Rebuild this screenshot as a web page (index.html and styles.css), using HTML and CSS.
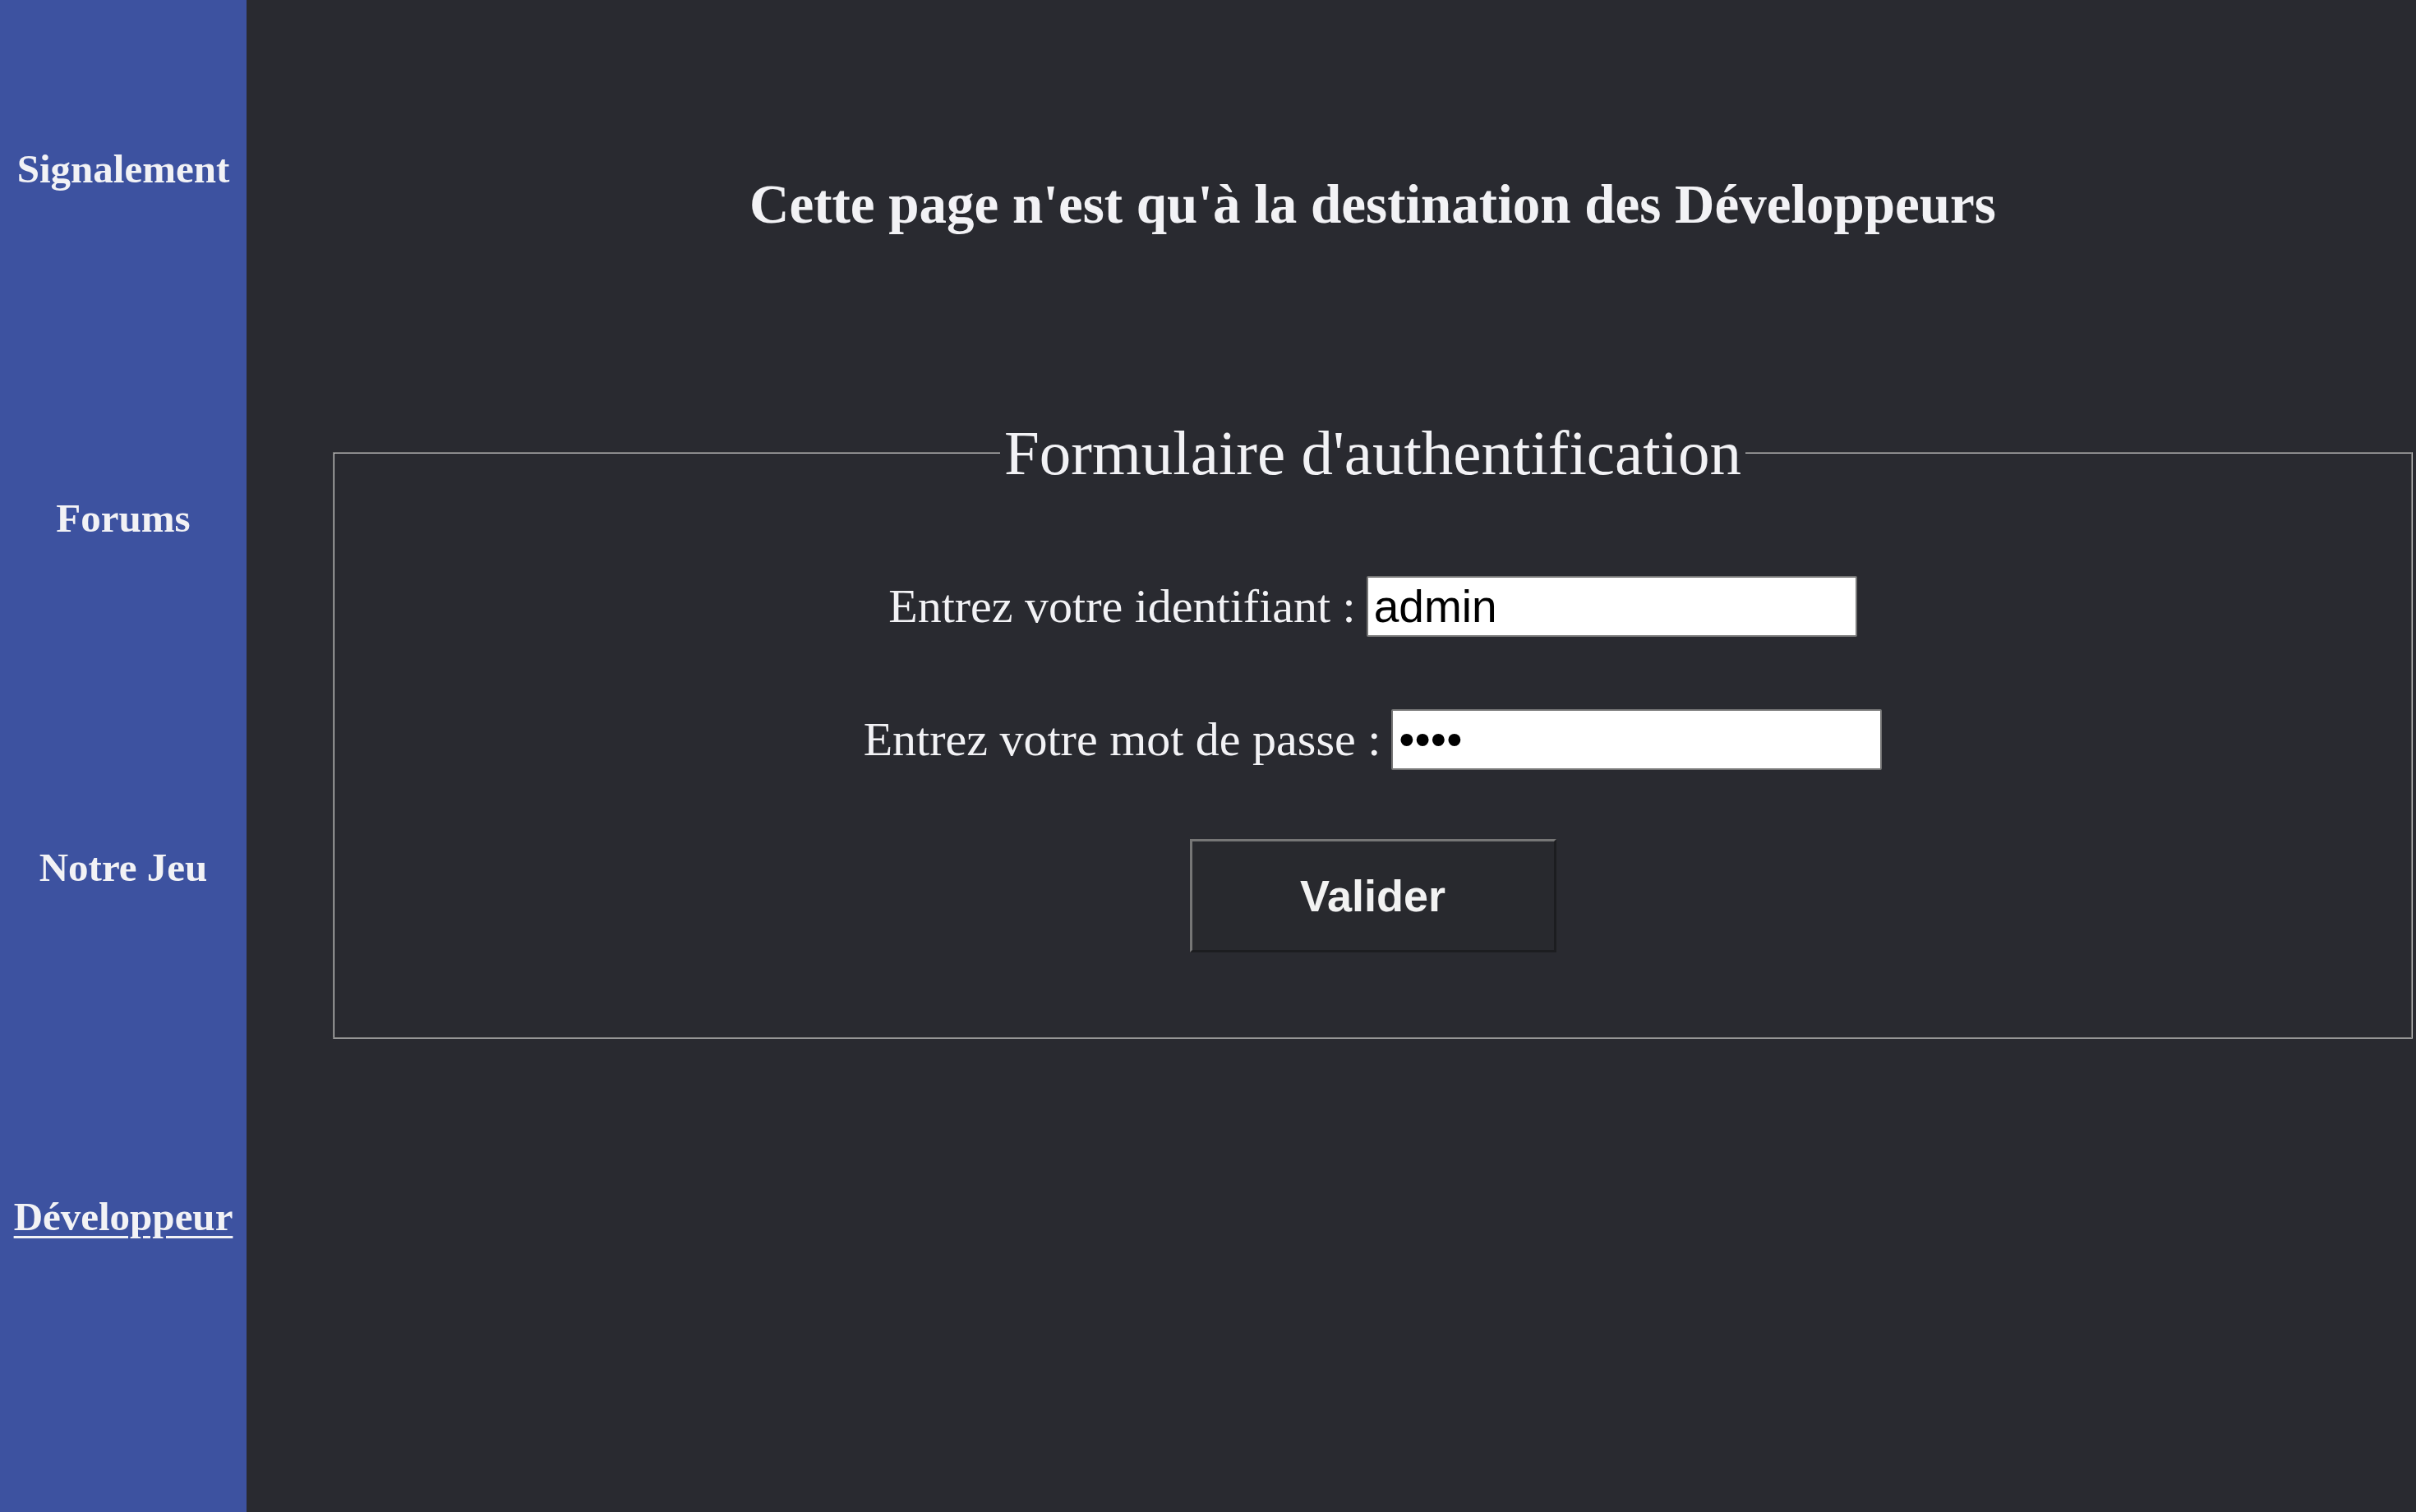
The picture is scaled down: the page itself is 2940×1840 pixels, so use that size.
FILE: index.html
```html
<!DOCTYPE html>
<html lang="fr">
<head>
<meta charset="utf-8">
<title>Développeur</title>
<link rel="stylesheet" href="styles.css">
</head>
<body>
<nav class="sidebar">
  <a class="nav-link" href="#">Signalement</a>
  <a class="nav-link" href="#">Forums</a>
  <a class="nav-link" href="#">Notre Jeu</a>
  <a class="nav-link active" href="#">Développeur</a>
</nav>
<main class="main">
  <h1 class="title">Cette page n'est qu'à la destination des Développeurs</h1>
  <form class="auth-form">
    <fieldset class="auth-fieldset">
      <legend class="auth-legend">Formulaire d'authentification</legend>
      <div class="row">
        <label class="row-label" for="login">Entrez votre identifiant :</label>
        <input class="row-input" id="login" type="text" value="admin">
      </div>
      <div class="row">
        <label class="row-label" for="pass">Entrez votre mot de passe :</label>
        <input class="row-input" id="pass" type="password" value="abcd">
      </div>
      <div class="row-button">
        <button class="submit" type="button">Valider</button>
      </div>
    </fieldset>
  </form>
</main>
</body>
</html>
```

FILE: styles.css
```css
html, body {
  margin: 0;
  padding: 0;
}

body {
  display: flex;
  min-height: 1840px;
  background: #292a30;
  color: #f2f2f5;
  font-family: "Liberation Serif", "Times New Roman", serif;
}

.sidebar {
  width: 300px;
  flex: 0 0 300px;
  background: #3d52a0;
  display: flex;
  flex-direction: column;
  align-items: center;
  gap: 365px;
  padding-top: 176px;
  box-sizing: border-box;
}

.nav-link {
  color: #f2f2f5;
  font-size: 49px;
  line-height: 60px;
  font-weight: bold;
  text-decoration: none;
}

.nav-link.active {
  text-decoration: underline;
  text-decoration-thickness: 3px;
  text-underline-offset: 7px;
}

.main {
  flex: 1;
  padding: 0 4px 0 105px;
  min-width: 0;
}

.title {
  margin: 208px 0 0;
  font-size: 67px;
  line-height: 80px;
  font-weight: bold;
  text-align: center;
}

.auth-form {
  margin: 219px 0 0;
}

.auth-fieldset {
  margin: 0;
  padding: 106px 0 103px;
  border: 2px groove #c0c0c0;
  display: flex;
  flex-direction: column;
  align-items: center;
}

.auth-legend {
  margin: 0 auto;
  padding: 0 5px;
  font-size: 77px;
  line-height: 88px;
}

.row {
  display: flex;
  align-items: center;
  justify-content: center;
  gap: 13px;
  height: 74px;
  width: 100%;
}

.row + .row {
  margin-top: 88px;
}

.row-label {
  font-size: 58px;
  line-height: 74px;
}

.row-input {
  box-sizing: border-box;
  width: 597px;
  height: 74px;
  margin: 0;
  padding: 0 7px;
  border: 2px solid #767676;
  border-radius: 2px;
  background: #ffffff;
  color: #000000;
  font-family: "Liberation Sans", Arial, sans-serif;
  font-size: 55px;
}

.row-button {
  margin-top: 84px;
  display: flex;
  justify-content: center;
  width: 100%;
}

.submit {
  box-sizing: border-box;
  width: 446px;
  height: 138px;
  margin: 0;
  padding: 0;
  background: #28292e;
  color: #f2f2f2;
  border-style: solid;
  border-width: 3px;
  border-color: #767676 #1c1d20 #1c1d20 #767676;
  font-family: "Liberation Sans", Arial, sans-serif;
  font-weight: bold;
  font-size: 54px;
}
```
